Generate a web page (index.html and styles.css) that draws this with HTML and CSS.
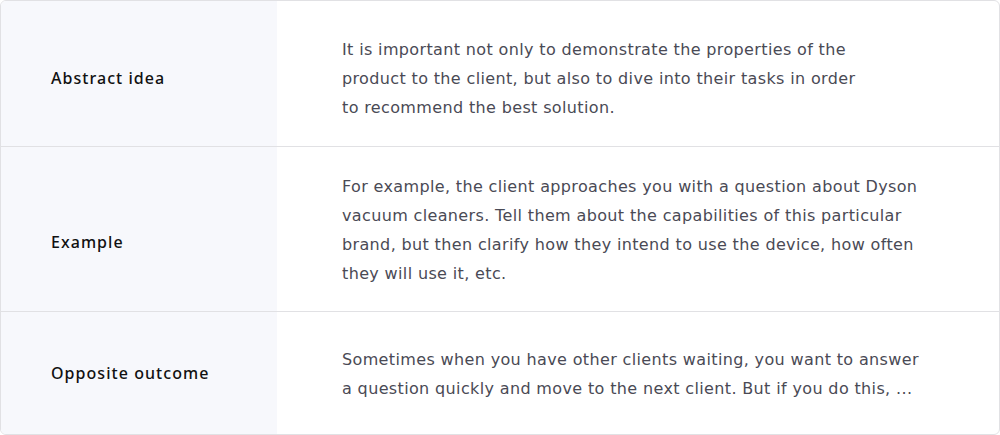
FILE: index.html
```html
<!DOCTYPE html>
<html>
<head>
<meta charset="utf-8">
<link rel="stylesheet" href="styles.css">
</head>
<body>
<div class="table">
  <div class="row r1">
    <div class="label">Abstract idea</div>
    <div class="text">It is important not only to demonstrate the properties of the<br>product to the client, but also to dive into their tasks in order<br>to recommend the best solution.</div>
  </div>
  <div class="row r2">
    <div class="label">Example</div>
    <div class="text">For example, the client approaches you with a question about Dyson<br>vacuum cleaners. Tell them about the capabilities of this particular<br>brand, but then clarify how they intend to use the device, how often<br>they will use it, etc.</div>
  </div>
  <div class="row r3">
    <div class="label">Opposite outcome</div>
    <div class="text">Sometimes when you have other clients waiting, you want to answer<br>a question quickly and move to the next client. But if you do this, ...</div>
  </div>
</div>
</body>
</html>
```
FILE: styles.css
```css
html, body { margin: 0; padding: 0; background: #fff; }
body { font-family: "Noto Sans", "Open Sans", sans-serif; font-size: 16px; }
.table {
  width: 1000px;
  height: 435px;
  box-sizing: border-box;
  border: 1px solid #e1e1e4;
  border-radius: 6px;
  overflow: hidden;
  display: flex;
  flex-direction: column;
}
.row { display: flex; border-top: 1px solid #e1e1e4; }
.row:first-child { border-top: none; }
.r1 { height: 145px; }
.r2 { height: 164px; }
.r3 { flex: 1; }
.label {
  width: 276px;
  flex: none;
  background: #f7f8fc;
  display: flex;
  align-items: center;
  padding-left: 50px;
  box-sizing: border-box;
  color: #111;
  font-weight: 500;
  font-size: 16px;
  letter-spacing: 1.05px;
}
.text {
  display: flex;
  align-items: center;
  padding-left: 65px;
  color: #4a4a55;
  line-height: 29px;
  font-family: "DejaVu Sans", sans-serif;
  font-size: 16px;
  letter-spacing: 0.36px;
}
.r1 .label { padding-top: 8px; }
.r1 .text { padding-top: 9px; }
.r2 .label { padding-top: 26px; }
.r2 .text { padding-top: 2px; }
.r3 .label { padding-top: 0; }
.r3 .text { padding-top: 2px; }
```
